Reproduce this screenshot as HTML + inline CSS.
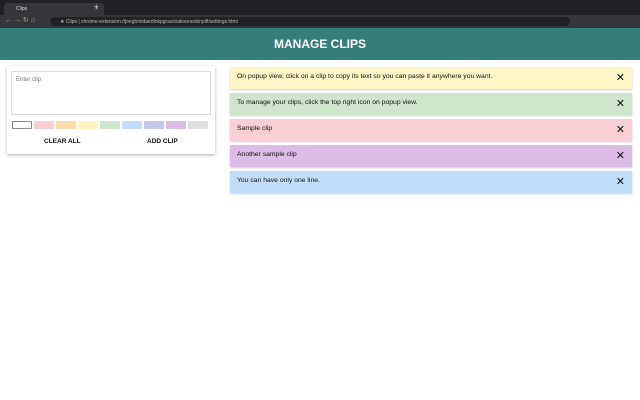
<!DOCTYPE html>
<html><head><style>
*{margin:0;padding:0;box-sizing:border-box}
body{width:640px;height:400px;background:#fff;font-family:"Liberation Sans",sans-serif;position:relative;overflow:hidden}
.tabs{position:absolute;left:0;top:0;width:640px;height:15px;background:#202124}
.tab{position:absolute;left:4px;top:3px;width:100px;height:12px;background:#35363a;border-radius:4px 4px 0 0;color:#ddd;font-size:5px;padding:3px 0 0 12px}
.tool{position:absolute;left:0;top:15px;width:640px;height:13px;background:#35363a}
.url{position:absolute;left:50px;top:2px;height:9px;background:#202124;border-radius:5px;color:#bbb;font-size:5px;padding:2px 0 0 10px;white-space:nowrap;width:520px}
.hdr{position:absolute;left:0;top:28px;width:640px;height:32px;background:#367e7a;color:#fff;font-weight:bold;font-size:12px;text-align:center;line-height:32px}
.card{position:absolute;left:7px;top:66px;width:208px;height:88px;background:#fff;box-shadow:0 1px 3px rgba(0,0,0,.3)}
.ta{position:absolute;left:4px;top:5px;width:200px;height:44px;border:1px solid #ddd;font-size:6px;color:#777;padding:5px 4px}
.sw{position:absolute;top:55px;width:20px;height:8px;border-radius:1px}
.btn{position:absolute;top:72px;font-size:6.5px;font-weight:bold;color:#111}
.clip{position:absolute;left:230px;width:402px;height:22px;font-size:6.8px;color:#111;padding:0 0 0 7px;line-height:20px;box-shadow:0 1px 2px rgba(0,0,0,.2)}
.clip b{position:absolute;right:7px;top:4px;font-size:11px;font-weight:normal;line-height:14px}
</style></head><body>
<div class="tabs"><div class="tab">Clips<span style="position:absolute;right:6px">×</span></div><span style="position:absolute;left:94px;top:2px;color:#ccc;font-size:8px">+</span></div>
<div class="tool"><span style="position:absolute;left:5px;top:1px;color:#aaa;font-size:7px">←  →  ↻  ⌂</span><div class="url">★ Clips | chrome-extension://joegbmidaedinkpgcacioakooneobnpifl/settings.html</div></div>
<div class="hdr">MANAGE CLIPS</div>
<div class="card">
<div class="ta">Enter clip</div>
<div class="sw" style="left:5px;border:1px solid #888;background:#fff"></div>
<div class="sw" style="left:27px;background:#f7cfd4"></div>
<div class="sw" style="left:49px;background:#fbdcaf"></div>
<div class="sw" style="left:71px;background:#fdf6c4"></div>
<div class="sw" style="left:93px;background:#cfe6cc"></div>
<div class="sw" style="left:115px;background:#c2ddf7"></div>
<div class="sw" style="left:137px;background:#c6c8ea"></div>
<div class="sw" style="left:159px;background:#dbbde5"></div>
<div class="sw" style="left:181px;background:#e0e0e0"></div>
<div class="btn" style="left:37px">CLEAR ALL</div>
<div class="btn" style="left:140px">ADD CLIP</div>
</div>
<div class="clip" style="top:67px;background:#fdf6c6">On popup view, click on a clip to copy its text so you can paste it anywhere you want.<b>✕</b></div>
<div class="clip" style="top:93px;background:#cfe5cc">To manage your clips, click the top right icon on popup view.<b>✕</b></div>
<div class="clip" style="top:119px;background:#f7cfd4">Sample clip<b>✕</b></div>
<div class="clip" style="top:145px;background:#dbbde5">Another sample clip<b>✕</b></div>
<div class="clip" style="top:171px;background:#c2ddf7">You can have only one line.<b>✕</b></div>
</body></html>
